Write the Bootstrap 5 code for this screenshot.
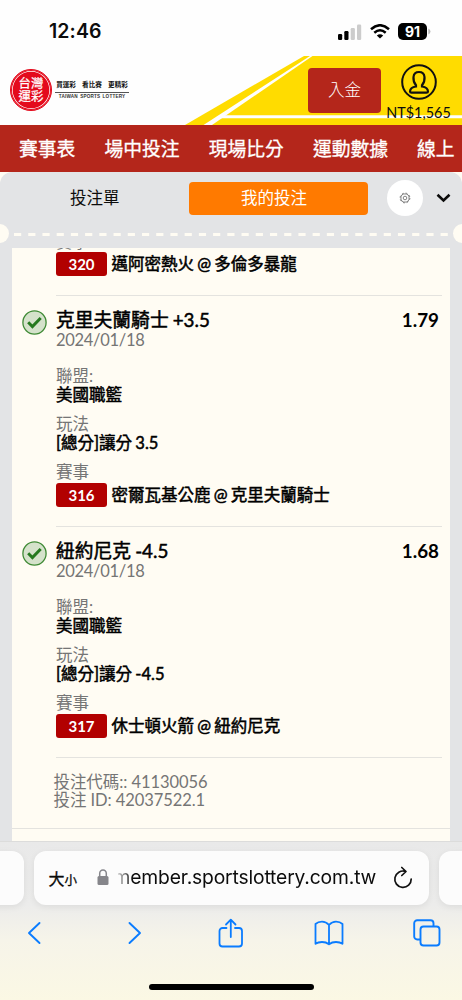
<!DOCTYPE html>
<html lang="zh-Hant">
<head>
<meta charset="utf-8">
<meta name="viewport" content="width=device-width, initial-scale=1">
<title>台灣運彩</title>
<link href="https://cdn.jsdelivr.net/npm/bootstrap@5.3.0/dist/css/bootstrap.min.css" rel="stylesheet">
<style>
body{font-family:Lato,"Noto Sans CJK TC",sans-serif;font-size:16.5px;color:#0c0c0c;height:1000px;overflow:hidden;background:#fffcf3}
svg{display:block;flex:none}
.statusbar{height:55px;padding:8px 31px 0 49px;font-family:Inter,sans-serif;background:#fefefe}
.clock{font-size:19.5px;font-weight:600;letter-spacing:.1px}
.batt{width:29px;height:17px;border-radius:5px;background:#000;color:#fff;font-size:14px;font-weight:700;line-height:17px}
.masthead{height:70px;background:#fefefe}
.masthead .court{left:0;top:0}
.brand-text{width:74px;margin-left:3px}
.slogan{font-size:6.6px;line-height:10px;font-weight:700;padding-bottom:3px;border-bottom:1px solid #555;word-spacing:4.6px;white-space:nowrap}
.eng{font-family:"Liberation Sans",sans-serif;font-size:4.65px;line-height:8px;font-weight:700;white-space:nowrap;color:#333;word-spacing:1px;letter-spacing:.16px}
.seal{width:42px;height:42px;margin-left:1px;border-radius:50%;background:#e40a1c;border:1px solid #e40a1c;box-shadow:inset 0 0 0 1px #e40a1c,inset 0 0 0 1.7px #fff;color:#fff;font-size:12.4px;line-height:12.6px;font-weight:400;-webkit-text-stroke:.25px #fff;padding-top:8px}
.deposit{width:73px;height:45px;border-radius:4px;background:#b4261b;color:#fff;font-size:16.5px;font-weight:300;margin-top:1px}
.amount{font-size:14.4px;line-height:17px}
.mainnav{height:47px;background:#b4261b;color:#fff;font-size:18.8px;gap:29.1px;padding:1px 0 0 19px;font-weight:400}
.mainnav span{-webkit-text-stroke:.3px #fff;white-space:nowrap}
.panel{height:669px;background:#e3e4e6;border-radius:12px 12px 0 0}
.tabs{height:52px;padding-left:9px}
.tab-off{width:180px;padding-left:61px}
.tab-on{width:179px;height:33px;border-radius:4px;background:#ff7a00;color:#fff;padding-right:9px}
.gear{width:36px;height:36px;background:#fff;margin-left:19px}
.perf{height:24px}
.perf .notch{width:19px;height:19px;border-radius:50%;background:#fffcf3;top:0}
.slip{margin:0 12px;height:593px;background:#fffcf3;overflow:hidden}
.bet{border-bottom:1px solid #e4e3df;margin-left:44px;margin-right:8px}
.bet-cut{height:48px;overflow:hidden}
.bet-cut .gray{margin-top:-15px;height:19px}
.rowpad{height:231px;padding-top:13px}
.ttl,.val,.match{font-weight:400;-webkit-text-stroke:.5px #000;color:#000}
.ttl{font-size:18.8px;line-height:22px;padding-right:3px;word-spacing:-.8px}
.ttl .odds{font-weight:700;-webkit-text-stroke:0}
.gray{color:#757575;line-height:18px}
.day{letter-spacing:-.3px;margin-bottom:18px}
.val{line-height:21px;margin-bottom:9px;word-spacing:-1px}
.tick{left:-34px;top:14px}
.num{width:51px;height:24px;border-radius:3px;background:#b20000;color:#fff;font-size:15px;font-weight:700;margin-right:4.5px;-webkit-text-stroke:0}
.match{height:24px;white-space:nowrap;word-spacing:-1px}
.codes{margin-left:41.5px;margin-top:15px;line-height:18px;color:#757575;letter-spacing:-.07px}
.safari{height:159px;background:linear-gradient(#e9e9e9 0,#ececeb 40%,#f6f4e9 62%,#fbf8e4 100%);border-top:1px solid #dcdcdb;font-family:Inter,sans-serif}
.pill{background:#fcfcfc;border-radius:12px;height:54px;box-shadow:0 2px 7px rgba(0,0,0,.07);flex:none}
.url{font-size:19.3px;letter-spacing:-.16px;width:261px;-webkit-mask-image:linear-gradient(90deg,rgba(0,0,0,.2) 0,#000 15px);mask-image:linear-gradient(90deg,rgba(0,0,0,.2) 0,#000 15px);overflow:hidden;white-space:nowrap}
.url span{display:block;margin-left:-4px}
.tools{padding:0 21px 0 26px;height:57px;color:#0a7cff}
.homebar{width:165px;height:6px;border-radius:3px;background:#000;margin-top:22px}
</style>
</head>
<body>
<div class="statusbar d-flex align-items-center justify-content-between">
  <span class="clock">12:46</span>
  <div class="d-flex align-items-center">
    <svg width="24" height="16" viewBox="0 0 24 16"><rect x="0" y="10" width="4.2" height="6" rx="1.2"/><rect x="6.3" y="7" width="4.2" height="9" rx="1.2"/><rect x="12.7" y="4" width="4.2" height="12" rx="1.2" fill="#ccc"/><rect x="19" y="0.5" width="4.2" height="15.5" rx="1.2" fill="#ccc"/></svg>
    <svg class="ms-2" width="20" height="15" viewBox="0 0 20 15" fill="none" stroke="#000" stroke-width="2.5"><path d="M1 5.3Q10-2.8 19 5.3M4.3 8.7q5.7-5 11.4 0"/><path d="M10 14.5 6.8 11.4q3.2-2.5 6.4 0z" fill="#000" stroke="none"/></svg>
    <div class="batt text-center" style="margin-left:8px">91</div>
    <svg width="4" height="7" viewBox="0 0 4 7"><path d="M1.3.5Q3.5 1.5 3.5 3.5T1.3 6.5z" fill="#bbb"/></svg>
  </div>
</div>
<header class="masthead position-relative">
  <svg class="court position-absolute" width="462" height="70" viewBox="0 0 462 70"><path d="M304 1H462V70H185z" fill="#ffdc00"/><path d="M310 1h2.500L212 70h-8.500z" fill="#fefefe"/><path d="M222 60.3H462v3H218z" fill="#fefefe"/></svg>
  <div class="position-relative d-flex h-100 align-items-center justify-content-between" style="padding:0 6px 0 9px">
    <div class="d-flex align-items-center">
      <div class="seal text-center"><div>台灣</div><div>運彩</div></div>
      <div class="brand-text text-center"><div class="slogan">買運彩 看比賽 更精彩</div><div class="eng">TAIWAN SPORTS LOTTERY</div></div>
    </div>
    <div class="d-flex align-items-center">
      <div class="deposit d-flex align-items-center justify-content-center">入金</div>
      <div class="d-flex flex-column align-items-center" style="width:75px;padding-top:5px">
        <svg width="36" height="36" viewBox="0 0 36 36" fill="none" stroke="#111" stroke-width="2"><circle cx="18" cy="18" r="16.8"/><path d="M15 21.2Q12 17.5 12.5 13Q13 8 18 8T23.500 13Q24 17.500 21 21.200V22.500Q26.800 23.200 27 27.500Q27 28.600 25.500 28.600H10.500Q9 28.600 9 27.500Q9.200 23.200 15 22.500z" stroke-width="2.2"/></svg>
        <div class="amount" style="margin-top:4px">NT$1,565</div>
      </div>
    </div>
  </div>
</header>
<nav class="mainnav d-flex align-items-center overflow-hidden"><span>賽事表</span><span>場中投注</span><span>現場比分</span><span>運動數據</span><span>線上</span></nav>
<main class="panel overflow-hidden">
  <div class="tabs d-flex align-items-center">
    <div class="tab-off">投注單</div>
    <div class="tab-on d-flex align-items-center justify-content-center">我的投注</div>
    <div class="gear rounded-circle d-flex align-items-center justify-content-center">
      <svg width="12" height="12" viewBox="0 0 12 12" fill="none" stroke="#666" stroke-width=".8"><circle cx="6" cy="6" r="4.100"/><circle cx="6" cy="6" r="4.900" stroke-dasharray="1.900 1.950"/><circle cx="6" cy="6" r="1.800"/></svg>
    </div>
    <svg width="15" height="10" viewBox="0 0 15 10" style="margin-left:13px" fill="none" stroke="#0c0c0c" stroke-width="2.600"><path d="M1.500 1.800 7.500 7.500 13.500 1.800"/></svg>
  </div>
  <div class="perf position-relative">
    <div class="notch position-absolute" style="left:-10px"></div><div class="notch position-absolute" style="right:-10px"></div>
    <svg width="462" height="24" viewBox="0 0 462 24"><path d="M14 10.500H450" stroke="#fffcf3" stroke-width="3" stroke-dasharray="7.200 7.020"/></svg>
  </div>
  <section class="slip">
    <div class="bet bet-cut">
      <div class="gray">賽事</div>
      <div class="match d-flex align-items-center"><span class="num d-flex align-items-center justify-content-center">320</span>邁阿密熱火 @ 多倫多暴龍</div>
    </div>
    <article class="bet rowpad position-relative">
      <svg class="tick position-absolute" width="25" height="25" viewBox="0 0 25 25"><circle cx="12.500" cy="12.500" r="11.600" fill="#d5e2cb" stroke="#3f8a35" stroke-width="1.300"/><path d="m6.200 12.300 4.200 4.200 8.300-8.500" fill="none" stroke="#26791f" stroke-width="3"/></svg>
      <div class="ttl d-flex justify-content-between"><span>克里夫蘭騎士 +3.5</span><span class="odds">1.79</span></div>
      <div class="gray day">2024/01/18</div>
      <div class="gray">聯盟:</div><div class="val">美國職籃</div>
      <div class="gray">玩法</div><div class="val">[總分]讓分 3.5</div>
      <div class="gray" style="margin-bottom:2px">賽事</div>
      <div class="match d-flex align-items-center"><span class="num d-flex align-items-center justify-content-center">316</span>密爾瓦基公鹿 @ 克里夫蘭騎士</div>
    </article>
    <article class="bet rowpad position-relative">
      <svg class="tick position-absolute" width="25" height="25" viewBox="0 0 25 25"><circle cx="12.500" cy="12.500" r="11.600" fill="#d5e2cb" stroke="#3f8a35" stroke-width="1.300"/><path d="m6.200 12.300 4.200 4.200 8.300-8.500" fill="none" stroke="#26791f" stroke-width="3"/></svg>
      <div class="ttl d-flex justify-content-between"><span>紐約尼克 -4.5</span><span class="odds">1.68</span></div>
      <div class="gray day">2024/01/18</div>
      <div class="gray">聯盟:</div><div class="val">美國職籃</div>
      <div class="gray">玩法</div><div class="val">[總分]讓分 -4.5</div>
      <div class="gray" style="margin-bottom:2px">賽事</div>
      <div class="match d-flex align-items-center"><span class="num d-flex align-items-center justify-content-center">317</span>休士頓火箭 @ 紐約尼克</div>
    </article>
    <div class="codes">投注代碼:: 41130056<br>投注 ID: 42037522.1</div>
    <div style="border-top:1px solid #e4e3df;margin-top:19px"></div>
  </section>
</main>
<footer class="safari overflow-hidden">
  <div class="d-flex" style="padding-top:8.5px;gap:10px;margin-left:-20px;width:512px">
    <div class="pill" style="width:43.5px"></div>
    <div class="pill d-flex align-items-center" style="width:395px;padding-left:15px">
      <span style="font:400 16px 'Noto Sans CJK TC',sans-serif;-webkit-text-stroke:.3px #000;width:48px">大<span style="font-size:12.500px">小</span></span>
      <svg width="12" height="17" viewBox="0 0 12 17"><rect x="0.500" y="7" width="11" height="9" rx="1.500" fill="#85858a"/><path d="M2.700 8V4.500a3.300 3.500 0 0 1 6.600 0V8" fill="none" stroke="#85858a" stroke-width="1.500"/></svg>
      <div class="url" style="margin-left:9px"><span>member.sportslottery.com.tw</span></div>
      <svg style="margin-left:13px" width="22" height="24" viewBox="0 0 22 24" fill="none" stroke="#111" stroke-width="1.700" stroke-linecap="round" stroke-linejoin="round"><path d="M13.500 5.400A8.200 8.200 0 1 0 19.200 13M9.800 1.500 14 5.500 9.800 9.500"/></svg>
    </div>
    <div class="pill" style="width:54px"></div>
  </div>
  <div class="tools d-flex align-items-center justify-content-between">
    <svg width="16" height="24" viewBox="0 0 16 24" fill="none" stroke="currentColor" stroke-width="1.900" stroke-linecap="round" stroke-linejoin="round"><path d="M13.500 2 3 12l10.500 10"/></svg>
    <svg style="margin-left:15px" width="16" height="24" viewBox="0 0 16 24" fill="none" stroke="currentColor" stroke-width="1.900" stroke-linecap="round" stroke-linejoin="round"><path d="M2.500 2 13 12 2.500 22"/></svg>
    <svg style="margin-left:6px" width="26" height="30" viewBox="0 0 26 30" fill="none" stroke="currentColor" stroke-width="1.800" stroke-linecap="round" stroke-linejoin="round"><path d="M8.500 10H4.500a3 3 0 0 0-3 3V25.500a3 3 0 0 0 3 3H21a3 3 0 0 0 3-3V13a3 3 0 0 0-3-3H17M12.800 19V2M8 6.500 12.800 1.700 17.500 6.500"/></svg>
    <svg width="30" height="26" viewBox="0 0 30 26" fill="none" stroke="currentColor" stroke-width="1.800" stroke-linejoin="round"><path d="M15 5Q12 1.700 8 1.700T1.500 4V23.800Q4 22 8 22T15 24.300Q18 22 22 22T28.500 23.800V4Q26 1.700 22 1.700T15 5V24"/></svg>
    <svg width="28" height="28" viewBox="0 0 28 28" fill="none" stroke="currentColor" stroke-width="1.900"><rect x="7.500" y="7.500" width="19" height="19" rx="3"/><path d="M7.500 20.500H4.200a3 3 0 0 1-3-3V4.200a3 3 0 0 1 3-3H17.500a3 3 0 0 1 3 3V7.500"/></svg>
  </div>
  <div class="homebar mx-auto"></div>
</footer>
</body>
</html>
